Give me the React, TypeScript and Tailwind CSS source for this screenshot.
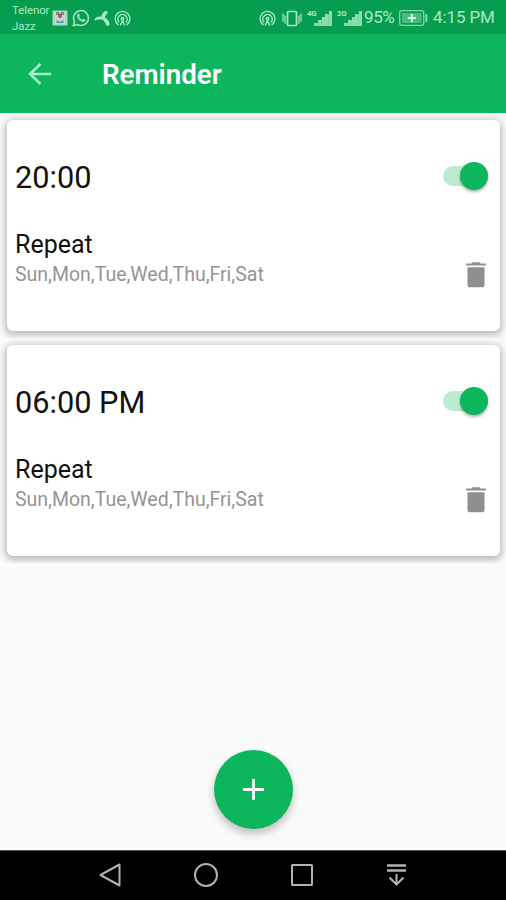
import { useState } from "react";

const DAYS = "Sun,Mon,Tue,Wed,Thu,Fri,Sat";

function HotspotIcon() {
  return (
    <svg width="17" height="17" viewBox="0 0 17 17" fill="none" stroke="currentColor" strokeWidth="1.4" strokeLinecap="round">
      <path d="M4 14.600A7.400 7.400 0 1 1 13 14.600" />
      <path d="M4.800 12A4.700 4.700 0 1 1 12.200 12" />
      <circle cx="8.5" cy="8.8" r="1.3" />
      <path d="m8.500 10.500-2 4.500M8.500 10.500l2 4.500" />
    </svg>
  );
}

function SignalIcon({ label }: any) {
  return (
    <span className="relative h-[17px] w-[25px]">
      <span className="absolute -top-px left-0 text-[8px] leading-[9px] font-bold tracking-tighter">{label}</span>
      <svg className="absolute bottom-px right-0" width="18" height="15" viewBox="0 0 18 15" fill="currentColor">
        <path d="M0 12h4V9h4V6h3V3h4V0h3v15H0z" opacity="0.7" />
        <path d="M0 12h3v3H0zM4 9h3v6H4zM8 6h3v9H8zM11 3h3v12h-3zM15 0h3v15h-3z" opacity="0.4" />
      </svg>
    </span>
  );
}

function StatusBar() {
  return (
    <div className="flex h-[34px] items-center bg-[#079d4f] pl-3 pr-[10px] text-[#a9e8c4]">
      <div className="mt-[2px] w-[40px] text-[11.500px] leading-[16px] tracking-[-0.1px]">
        <div>Telenor</div>
        <div>Jazz</div>
      </div>
      <svg className="mt-[2px]" width="16" height="16" viewBox="0 0 16 16">
        <rect x="0.5" y="0.5" width="15" height="15" rx="1" fill="#a5dcbd" />
        <path d="M3 2h10v12H3z" fill="#c5d9d5" />
        <path d="M4 2h3v3H4zM9 2h3v3H9z" fill="#7c8d8b" />
        <path d="M6 3.500h4V7L8 8.500 6 7z" fill="#c84b62" />
        <path d="m4.500 10 3.500 2 3.500-2v3h-7z" fill="#4d9bb2" />
      </svg>
      <svg className="ml-[4px] mt-[2px]" width="18" height="18" viewBox="0 0 18 18" fill="none" stroke="currentColor" strokeWidth="1.5">
        <path d="M1.3 16.7 2.5 12.6A7.4 7.4 0 1 1 5.4 15.5Z" strokeLinejoin="round" />
        <path d="M5.500 5.200c.5-.9 1.300-.9 1.700 0l.7 1.600-.9 1.100c.8 1.500 1.700 2.200 3.200 2.900l1-1.100 1.900.9c.6.3.3 1.400-.5 2-1 .7-2.800.2-4.200-.8C6.100 10.200 4.300 7.700 5.500 5.200Z" fill="currentColor" stroke="none" />
      </svg>
      <svg className="ml-[4px] mt-[2px]" width="17" height="17" viewBox="0 0 17 17" fill="currentColor">
        <path d="M7.300 9C7 5 9 1.500 12 1c2-.2 2.200 1.600 1 2.800C11.800 5 11.200 7 10 9Z" />
        <path d="M9 7C5.500 5.800 1.500 7 .5 9.200c-.4 1.500.8 1.600 2 .8C4.500 8.800 6.500 9 8.500 9.800Z" />
        <path d="M9.500 7c3.200.8 6 4.200 6 7 0 2.300-2.400 2.800-3.300.8-1.100-2.600-2.300-4.300-4.700-6Z" />
      </svg>
      <div className="ml-[3px] mt-[2px]"><HotspotIcon /></div>
      <div className="ml-auto mt-[2px] flex items-center">
        <HotspotIcon />
        <svg className="ml-[6px]" width="20" height="17" viewBox="0 0 20 17" fill="none" stroke="currentColor" strokeWidth="1.700">
          <rect x="5.500" y="1.500" width="9" height="14" rx="1" />
          <path d="M1 3.500v8M3 5.500v8M19 3.500v8M17 5.500v8" strokeWidth="1.200" />
        </svg>
        <span className="ml-[5px] flex gap-[5px]">
          <SignalIcon label="4G" />
          <SignalIcon label="2G" />
        </span>
        <span className="ml-[2px] w-[32px] whitespace-nowrap text-[17px] tracking-[-0.4px]">95%</span>
        <svg className="ml-[3px]" width="29" height="16" viewBox="0 0 29 16" fill="none" stroke="currentColor" strokeWidth="1.3">
          <rect x="0.700" y="0.700" width="24" height="14.600" rx="2" opacity="0.75" />
          <path d="M3 3h19.500v10H3z" fill="currentColor" stroke="none" opacity="0.4" />
          <path d="M12.800 4v8M8.800 8h8" stroke="#d8ffe7" strokeWidth="2" />
          <path d="M27.300 4v8" strokeWidth="2" opacity="0.8" />
        </svg>
        <span className="ml-[5px] w-[63px] whitespace-nowrap text-[17px] tracking-[-0.1px]">4:15 PM</span>
      </div>
    </div>
  );
}

function Header() {
  return (
    <div className="flex h-[79px] items-center bg-[#0db55d] pl-[28px]">
      <button aria-label="Back">
        <svg width="24" height="24" viewBox="0 0 24 24" fill="none" stroke="#a9efc8" strokeWidth="2.500">
          <path d="M23.200 12H2M12.500 2 2 12l10.500 10" />
        </svg>
      </button>
      <h1 className="ml-[50px] mt-[3px] text-[27.700px] font-semibold text-white">Reminder</h1>
    </div>
  );
}

function ReminderItem({ time }: any) {
  const [enabled, setEnabled] = useState(true);

  return (
    <div className="h-[225px] overflow-hidden pl-[7px] pr-[6px] pt-[7px]">
      <div className="flex h-[211px] flex-col rounded-[6px] bg-white pl-2 pr-3 pt-[35px] shadow-[0_2px_7px_2px_rgba(0,0,0,0.26)]">
        <div className="flex h-[46px] items-center justify-between">
          <div className="text-[30.700px] text-[#111]">{time}</div>
          <button
            role="switch"
            aria-checked={enabled}
            aria-label={time}
            onClick={() => setEnabled(!enabled)}
            className={`mb-[5px] flex h-5 w-[45px] items-center rounded-full ${enabled ? "justify-end bg-[#bdebd2]" : "bg-gray-300"}`}
          >
            <span className={`size-[28px] rounded-full shadow-[0_2px_3px_rgba(0,0,0,0.3)] ${enabled ? "bg-[#0db55d]" : "bg-gray-100"}`} />
          </button>
        </div>
        <div className="mt-[27px] flex justify-between">
          <div>
            <div className="text-[25px] leading-[34px] text-[#111]">Repeat</div>
            <div className="text-[19.500px] leading-[26px] text-[#949494]">{DAYS}</div>
          </div>
          <button aria-label="Delete" className="mr-[2px] mt-[34px] h-[26px]">
            <svg width="20" height="26" viewBox="0 0 20 26" fill="#8f8f8f">
              <path d="M0 1.500h5.500L6.500.2h7l1 1.300H20v2H0zM1.500 5.300h17v18a2 2 0 0 1-2 2h-13a2 2 0 0 1-2-2z" />
            </svg>
          </button>
        </div>
      </div>
    </div>
  );
}

function NavBar() {
  return (
    <div className="flex h-[50px] items-center justify-between border-t border-[#555] bg-black pb-[2px] pl-[98px] pr-[99px] text-[#b6b1b1]">
      <svg width="24" height="26" viewBox="0 0 24 26" fill="none" stroke="currentColor" strokeWidth="2" strokeLinejoin="round">
        <path d="M21.500 2.500v21L2.500 13z" />
      </svg>
      <svg width="24" height="26" viewBox="0 0 24 26" fill="none" stroke="currentColor" strokeWidth="2">
        <circle cx="12" cy="13" r="11" />
      </svg>
      <svg width="24" height="24" viewBox="0 0 24 24" fill="none" stroke="currentColor" strokeWidth="2">
        <rect x="2" y="2" width="20" height="20" rx="0.500" />
      </svg>
      <svg width="21" height="24" viewBox="0 0 21 24" fill="none" stroke="currentColor" strokeWidth="2">
        <path d="M1 2.500h19M1 7.500h19" strokeWidth="2.500" />
        <path d="M10.500 11v10M3.500 14.500l7 7 7-7" />
      </svg>
    </div>
  );
}

export default function App() {
  return (
    <div className="flex h-[900px] w-[506px] flex-col overflow-hidden bg-[#fafafa] font-['Roboto',sans-serif]">
      <StatusBar />
      <Header />
      <div>
        <ReminderItem time="20:00" />
        <ReminderItem time="06:00 PM" />
      </div>
      <div className="flex flex-1 items-end justify-center pb-[21px]">
        <button
          aria-label="Add reminder"
          className="flex size-[79px] items-center justify-center rounded-full bg-[#0db55d] shadow-[0_5px_8px_rgba(0,0,0,0.24)]"
        >
          <svg width="21" height="21" viewBox="0 0 21 21" stroke="white" strokeWidth="2.800">
            <path d="M10.500 0v21M0 10.500h21" />
          </svg>
        </button>
      </div>
      <NavBar />
    </div>
  );
}
